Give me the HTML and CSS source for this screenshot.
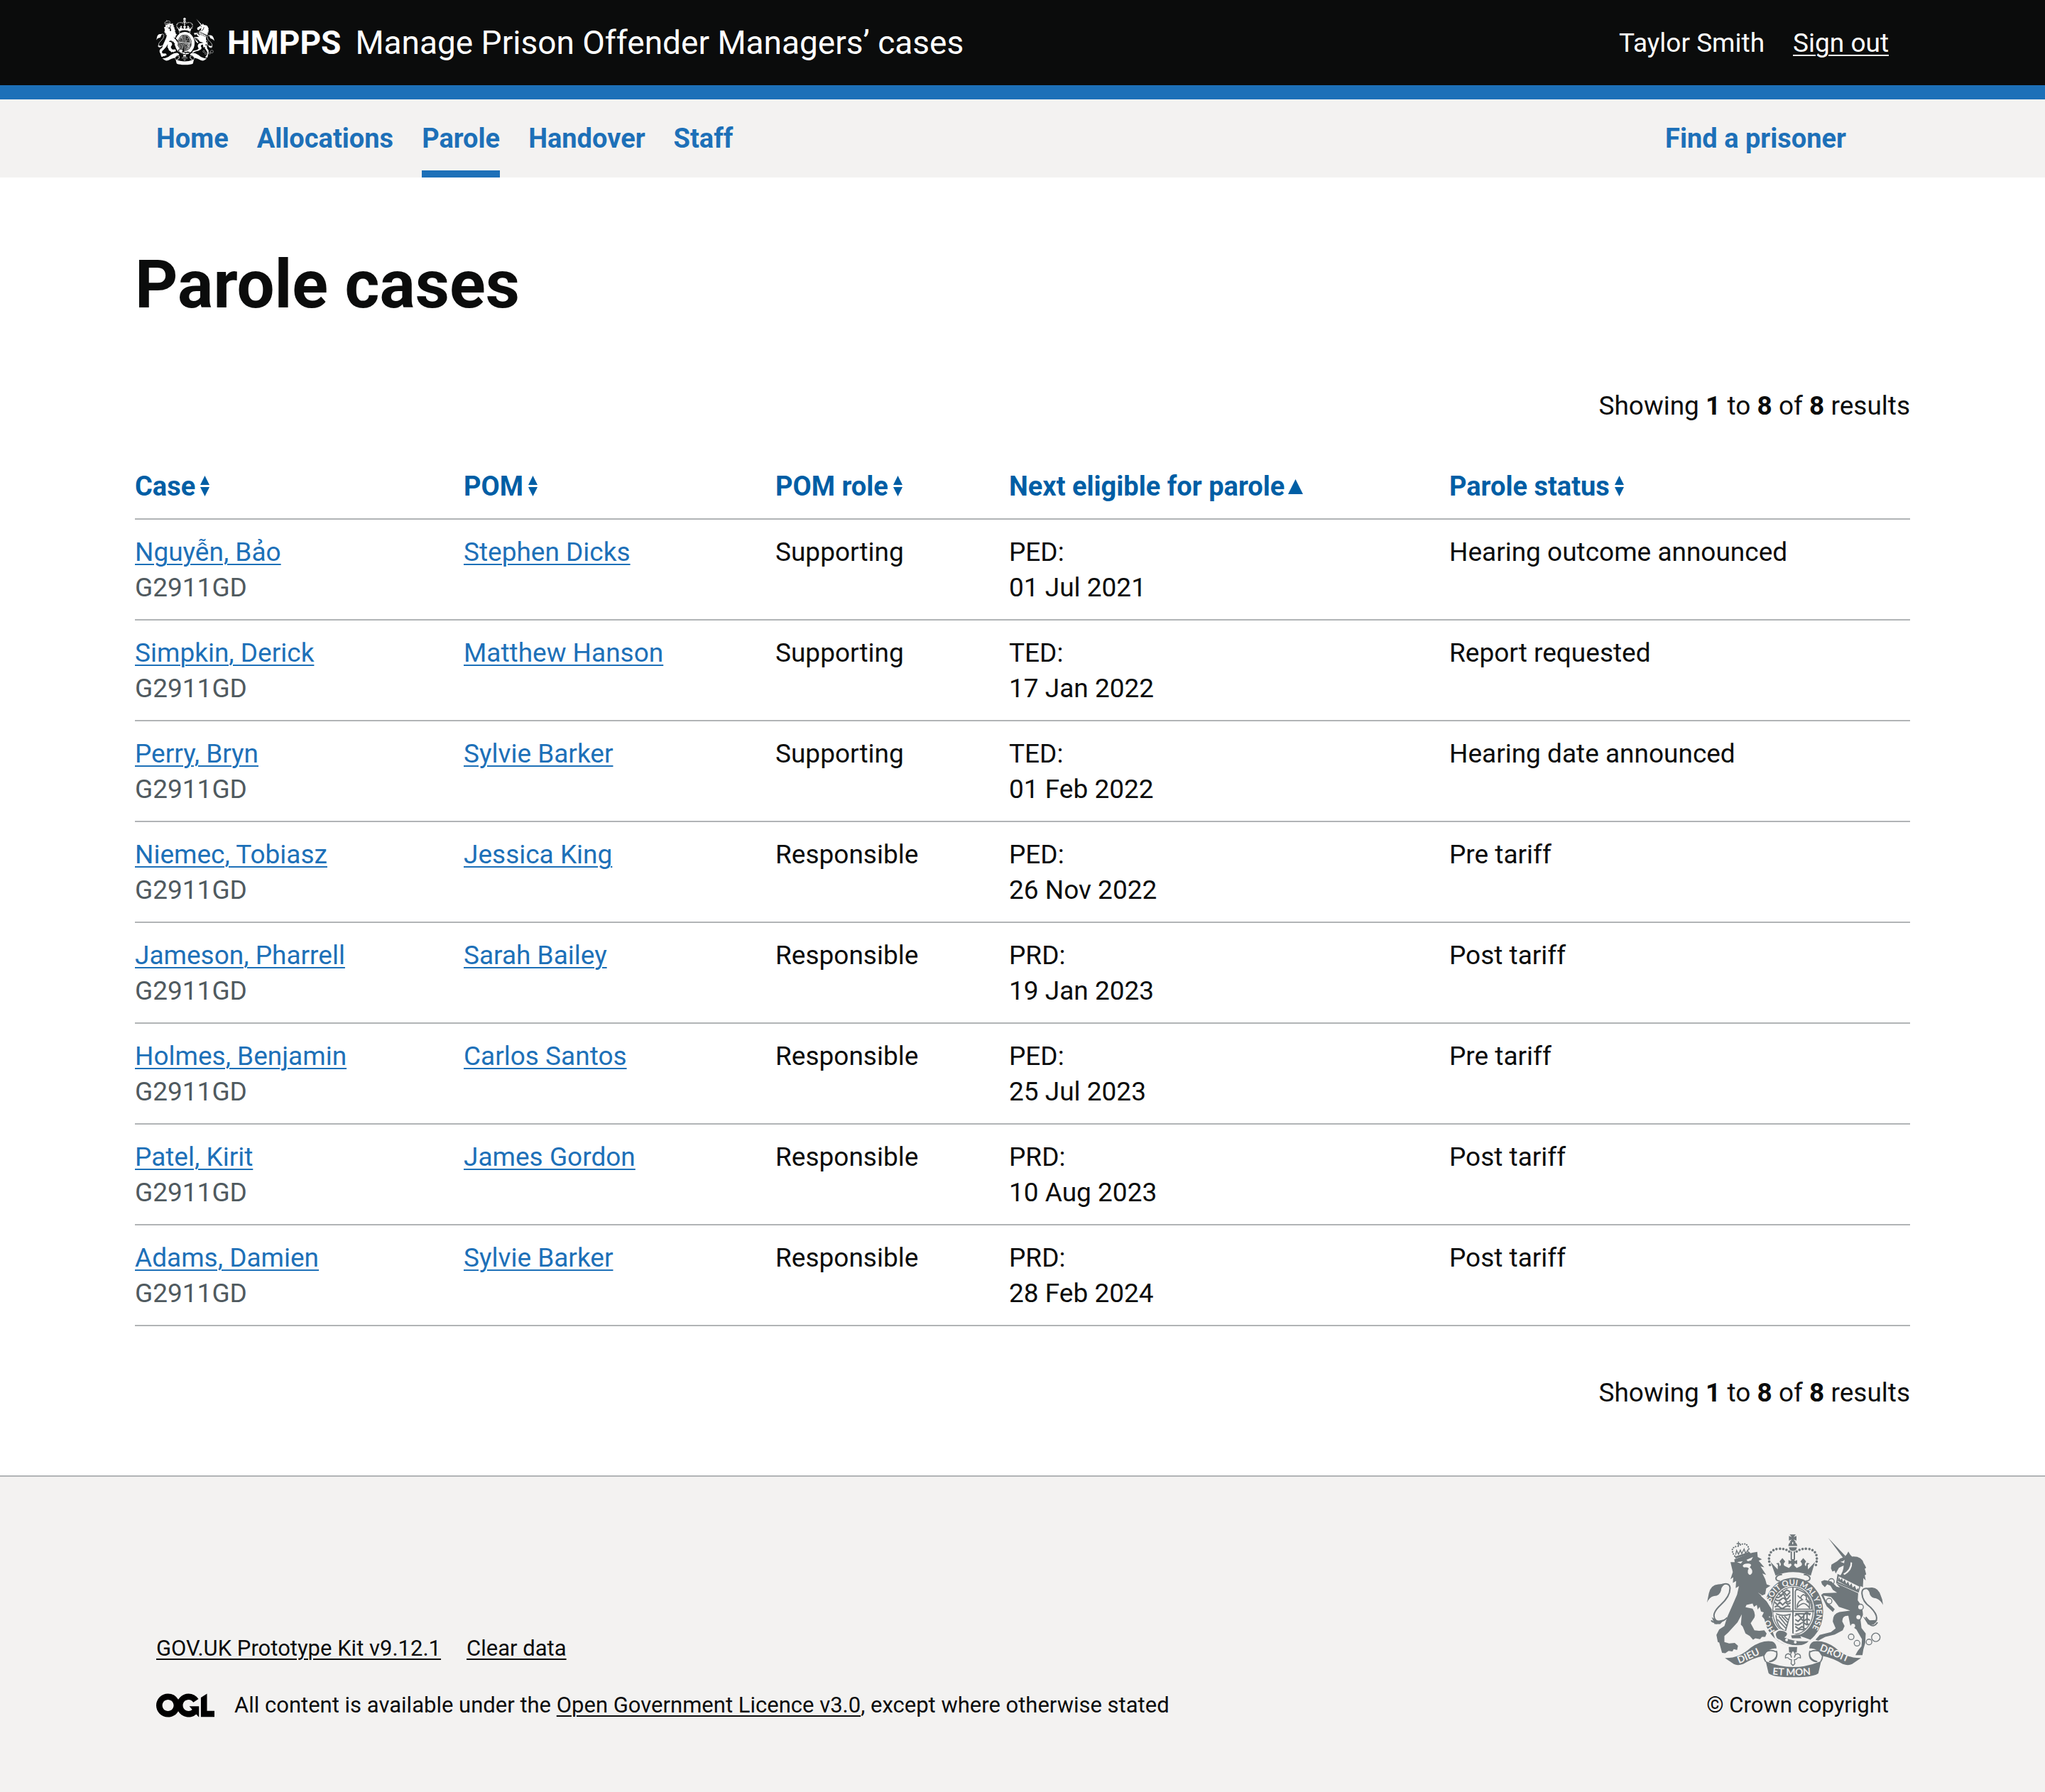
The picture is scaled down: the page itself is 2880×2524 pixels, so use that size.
FILE: index.html
```html
<!DOCTYPE html>
<html lang="en">
<head>
<meta charset="utf-8">
<meta name="viewport" content="width=device-width, initial-scale=1">
<title>Parole cases - Manage Prison Offender Managers’ cases</title>
<link rel="stylesheet" href="styles.css">
</head>
<body>
<svg class="sprite" aria-hidden="true">
  <symbol id="crest" viewBox="70 84 754 614">
    <!-- crown -->
    <g class="ink">
      <path d="M424 88h26l-9 11 12-5v20l-12-5 9 11h-26l9-11-12 5V94l12 5z"/>
      <path d="M418 137q3-18 17-18v10h4v-10q14 0 18 18z"/>
      <path d="M421 142h34q-2 16-17 16t-17-16z"/>
      <path d="M428 160h6v36h-6zM441 160h6v36h-6z"/>
      <path d="M343 205l30 32 1-20-8-6 12-2 4 14q6-2 4-12l-5-8 12-15 12 15-6 8q-2 10 6 12l16 8 11-12q0-12-13-4v-18q13 8 13-4h11q0 12 13 4v18q-13-8-13 4l11 12 16-8q8-2 6-12l-6-8 12-15 12 15-5 8q-2 10 4 12l4-14 12 2-8 6 1 20 30-32-18 58q-75-30-150 0z"/>
    </g>
    <g class="beads"><path d="M340 218q-16-62 34-69 32-2 49 12M536 218q16-62-34-69-32-2-49 12"/></g>
    <path class="line w6" d="M382 286q-18 0-16-14 4-12 26-14M494 286q18 0 16-14-4-12-26-14"/>
    <!-- garter and shield -->
    <ellipse class="ink" cx="440" cy="417" rx="127" ry="145"/>
    <ellipse class="gap" cx="438" cy="413" rx="92" ry="107"/>
    <ellipse class="line w4" cx="438" cy="413" rx="86" ry="101"/>
    <path class="line w6" d="M438 312v205M350 415h178"/>
    <path class="line w6" d="M366 352q8 12 20-4t18 6 22-8M362 364q14 12 26 0t20 4 20-2M360 376l12 12 10-12 12 12 12-12 10 10 12-8M360 398q12-10 22 0t20 0 24-2M376 338l12 12 12-16 12 14 14-14M362 406h66M390 326l8 10 14-12 14 8"/>
    <path class="line w6" d="M446 436q10-14 20 0t20-6 24 2M448 450l12 8 12-12 12 12 14-12 12 8M446 468q12 10 24 0t20 0 16 0M448 480l14 10 14-10 16 10M448 426h66M450 500l18-8 18 2M484 424v68M498 426v44"/>
    <path class="line w5" d="M448 330v76h70q0-40-30-70l-34-16zM456 398q0-26 22-32-14-12 4-22 18 4 12 22 18 2 14 34-16-20-26-18t-26 16zM458 348l12 12M508 380l-12-8"/>
    <path class="line w5" d="M366 432q2 50 40 68l20-72q-34 10-60-2M378 436l36 44M390 436l28 30M372 450l38 40M402 436l18 18"/>
    <!-- belt buckle -->
    <path class="gap" d="M352 504l30-14 130 46-20 30q-80 10-130-34z"/>
    <path class="ink" d="M365 512q4-16 24-14 16 0 24 12 0 10-12 16 50 22 104 16-14 18-48 18-44 0-74-24-18-4-18-24zM430 518l36-4 8 16-40 0z"/>
    <circle class="gap" cx="411" cy="537" r="6"/><circle class="gap" cx="448" cy="547" r="6"/>
    <!-- lion -->
    <path class="gap" d="M286 330l60 46 8 66-54 0z"/>
    <path class="ink" d="M172 206l18 0-2-12 76-28 22-4 2 22 18 10-14 6 24 28-16-4 24 36-16-6 12 24 6 22 16 6-18 12-4 24-18 8 26 24 20 34 4 30-10 6-4-10-6 18-10-8-2 8-14-16 8-16-12-4-6-20-8 12-4-20-12 8-6-14-26 6-4 10 30 6q14 20 8 38l-16 24 16 30 20 2 22-2 10 14-6 14-14 0-8 10-20-4-10 6-14-16-18-10-12-30-8-8 4-44-18 34-40 44-16 14 0 26 20 6 24-2 14 12-4 18-14-4-6 10-16-2-14 10-14-2-12-44-6-2-6-30 12-24 22-14 12-38 24-54 18-42 8-36-14 8 2-30-14 8 2-24-12 8 10-30z"/>
    <path class="gap" d="M200 206l24-4-8 10zM240 196l28-12-8 14-14 4zM224 222q4-10 20-10 14-2 16 6-2 6-6 10 14 10 10 24-10 16-18 0-2-12 4-20-8-6-16-4-6 2-10-6zM288 334l38 26 22 36-6 2-20-32z"/>
    <path class="ink" d="M190 182l62-20 8 8-66 20z"/>
    <path class="line w4" d="M194 174l4-18 8 16 8-18 6 16 10-20 6 18 10-14 2 16M206 118v18M198 127h16"/>
    <g class="beads small"><path d="M190 180q-26-38 14-42 42-28 48 22"/></g>
    <path class="line w6" d="M122 308q44-22 48 6 2 36-40 74-44 40-20 66 22 14 48-12M112 462q-16 2-22-8M120 460l-10 8"/>
    <path class="ink" d="M72 378q4-20 8-40 8-36 40-38 14-2 26 2-14 10-14 24-6 24-30 24-20 4-30 28zM92 440l24 16 30-6-18 20-24 0z"/>
    <!-- unicorn -->
    <path class="ink" d="M588 102l74 78-10 8z"/>
    <path class="ink" d="M600 232l2-16 24-14 14-12 18-6 10-12 6-12 8 14 8 8q42-2 50 30 4 4 10 18l-6 4 6 24-6 4 4 22-10-10-2 38-100-44q18-22 18-48l-20 10-14 24-4-12-10 4z"/>
    <path class="gap" d="M640 204q12 0 18-8l-2 14zM652 256q32-18 32-50l6 2q2 32-32 52z"/>
    <path class="ink" d="M628 256l98 50-8 30-96-42z"/>
    <path class="gap" d="M633 266l88 44-6 18-86-38z"/>
    <path class="ink" d="M629 286l6-16 5 12 7-8 4 16 8-10 6 18 8-10 6 18 9-10 4 18 10-8 6 18 8-8 0 12-6 2z"/>
    <path class="ink" d="M622 296l94 42-2 30q24 30 22 64l-10 20 4 34 18 24-2 40-8 28-4 24-30 0 10-18 16-20 2-30-24-42-26-18-8-40q-26-2-26 24l10 20-8 18-34 18-40 10-30 16-12-4 18-20 48-12 20-16-12-28q-2-34 28-42l46-6-48-16-18-24-16-18-32-6 12 26 24 20 12 12-8 12-26-24-24-48 10-8 58-2-18-12-10-18-14-6-10 12-12-12-4-12 14-6 30 6 22 22 14 4z"/>
    <g class="chain"><circle cx="602" cy="288" r="12"/><circle cx="592" cy="372" r="12"/><circle class="link-filled" cx="726" cy="397" r="12"/><circle cx="686" cy="524" r="12"/><circle cx="711" cy="551" r="12"/><circle cx="762" cy="546" r="12"/><circle cx="791" cy="526" r="18"/></g>
    <circle class="gap" cx="717" cy="440" r="9"/><circle class="gap" cx="694" cy="477" r="9"/>
    <path class="line w6" d="M772 322q-42-14-40 18 2 34 36 58 40 40 20 64-18 8-40-22M764 470q20 16 34-8"/>
    <path class="ink" d="M822 388q-2-24-10-40-10-32-36-34-14-2-24 6 12 8 14 24 6 14 26 16 20 8 30 28zM736 436l22 18 40-2-16 20-24 0z"/>
    <!-- ribbon -->
    <path class="ink" d="M148 614q60 2 110-44 50-34 92-26 18 8 18 30-34-4-52 30-50 10-90 36-24 8-40 0z"/>
    <path class="ink" d="M728 614q-60 2-110-44-50-34-92-26-18 8-18 30 34-4 52 30 50 10 90 36 24 8 40 0z"/>
    <path class="ink" d="M322 628q116 50 236 0l-12 52q-20 16-108 16t-104-18z"/>
    <path class="line w5" d="M322 630q-16-26 0-42 20-12 46 0 8 30-32 42M556 630q16-26 0-42-20-12-46 0-8 30 32 42M368 584q10 40-28 46M510 584q-10 40 28 46"/>
    <!-- fleur-de-lis -->
    <path class="ink" d="M420 567h36l-2 24h-32z"/>
    <path class="badge" d="M438 582q16 14 6 30 2-14 14-16 14 2 12 18-10-6-18 6l-8 2 2 16-8 8-8-8 2-16-8-2q-8-12-18-6-2-16 12-18 12 2 14 16-10-16 6-30z"/>
  </symbol>
  <symbol id="sort-both" viewBox="0 0 13 29">
    <path d="M6.5 0L13 13H0zM0 16h13L6.500 29z"/>
  </symbol>
  <symbol id="sort-up" viewBox="0 0 21 21">
    <path d="M10.500 0L21 21H0z"/>
  </symbol>
</svg>

<header class="header">
  <div class="container header-row">
    <div class="brand">
      <svg class="header-crest" aria-hidden="true"><use href="#crest"/></svg>
      <a class="organisation" href="#">HMPPS</a>
      <a class="service" href="#">Manage Prison Offender Managers’ cases</a>
    </div>
    <div class="account">
      <span>Taylor Smith</span>
      <a href="#">Sign out</a>
    </div>
  </div>
</header>

<nav class="nav" aria-label="Primary">
  <div class="container nav-row">
    <a href="#">Home</a>
    <a href="#">Allocations</a>
    <a href="#" class="current" aria-current="page">Parole</a>
    <a href="#">Handover</a>
    <a href="#">Staff</a>
    <a href="#" class="find">Find a prisoner</a>
  </div>
</nav>

<main class="main">
  <h1>Parole cases</h1>
  <p class="results">Showing <b>1</b> to <b>8</b> of <b>8</b> results</p>
  <table class="cases">
    <colgroup><col class="col-case"><col class="col-pom"><col class="col-role"><col class="col-next"><col class="col-status"></colgroup>
    <thead>
      <tr>
        <th scope="col"><button type="button">Case<svg class="sort" aria-hidden="true"><use href="#sort-both"/></svg></button></th>
        <th scope="col"><button type="button">POM<svg class="sort" aria-hidden="true"><use href="#sort-both"/></svg></button></th>
        <th scope="col"><button type="button">POM role<svg class="sort" aria-hidden="true"><use href="#sort-both"/></svg></button></th>
        <th scope="col" aria-sort="ascending"><button type="button">Next eligible for parole<svg class="sort-active" aria-hidden="true"><use href="#sort-up"/></svg></button></th>
        <th scope="col"><button type="button">Parole status<svg class="sort" aria-hidden="true"><use href="#sort-both"/></svg></button></th>
      </tr>
    </thead>
    <tbody>
      <tr><td><a href="#">Nguyễn, Bảo</a><span class="number">G2911GD</span></td><td><a href="#">Stephen Dicks</a></td><td>Supporting</td><td>PED:<br>01 Jul 2021</td><td>Hearing outcome announced</td></tr>
      <tr><td><a href="#">Simpkin, Derick</a><span class="number">G2911GD</span></td><td><a href="#">Matthew Hanson</a></td><td>Supporting</td><td>TED:<br>17 Jan 2022</td><td>Report requested</td></tr>
      <tr><td><a href="#">Perry, Bryn</a><span class="number">G2911GD</span></td><td><a href="#">Sylvie Barker</a></td><td>Supporting</td><td>TED:<br>01 Feb 2022</td><td>Hearing date announced</td></tr>
      <tr><td><a href="#">Niemec, Tobiasz</a><span class="number">G2911GD</span></td><td><a href="#">Jessica King</a></td><td>Responsible</td><td>PED:<br>26 Nov 2022</td><td>Pre tariff</td></tr>
      <tr><td><a href="#">Jameson, Pharrell</a><span class="number">G2911GD</span></td><td><a href="#">Sarah Bailey</a></td><td>Responsible</td><td>PRD:<br>19 Jan 2023</td><td>Post tariff</td></tr>
      <tr><td><a href="#">Holmes, Benjamin</a><span class="number">G2911GD</span></td><td><a href="#">Carlos Santos</a></td><td>Responsible</td><td>PED:<br>25 Jul 2023</td><td>Pre tariff</td></tr>
      <tr><td><a href="#">Patel, Kirit</a><span class="number">G2911GD</span></td><td><a href="#">James Gordon</a></td><td>Responsible</td><td>PRD:<br>10 Aug 2023</td><td>Post tariff</td></tr>
      <tr><td><a href="#">Adams, Damien</a><span class="number">G2911GD</span></td><td><a href="#">Sylvie Barker</a></td><td>Responsible</td><td>PRD:<br>28 Feb 2024</td><td>Post tariff</td></tr>
    </tbody>
  </table>
  <p class="results results-end">Showing <b>1</b> to <b>8</b> of <b>8</b> results</p>
</main>

<footer class="footer">
  <div class="container footer-row">
    <div class="footer-meta">
      <div class="footer-links">
        <a href="#">GOV.UK Prototype Kit v9.12.1</a>
        <a href="#">Clear data</a>
      </div>
      <div class="licence">
        <svg class="ogl" viewBox="0 0 483.2 195.7" role="img" aria-label="Open Government Licence"><path d="M421.5 142.8V.1l-50.7 32.3v161.1h112.4v-50.7zm-122.3-9.6A47.12 47.12 0 0 1 221 97.8c0-26 21.1-47.1 47.1-47.1 16.7 0 31.4 8.7 39.7 21.8l42.7-27.2A97.63 97.63 0 0 0 268.1 0c-36.5 0-68.3 20.1-85.1 49.7A98 98 0 0 0 97.8 0C43.9 0 0 43.9 0 97.8s43.9 97.8 97.8 97.8c36.5 0 68.3-20.1 85.1-49.7a97.76 97.76 0 0 0 149.6 25.4l19.4 22.2h3v-87.8h-80l24.3 27.5zM97.8 145c-26 0-47.1-21.1-47.1-47.1s21.1-47.1 47.1-47.1 47.1 21.1 47.1 47.1S123.8 145 97.8 145"/></svg>
        <span>All content is available under the <a href="#">Open Government Licence v3.0</a>, except where otherwise stated</span>
      </div>
    </div>
    <a class="copyright" href="#">
      <svg class="footer-crest" viewBox="70 84 754 614" aria-hidden="true">
        <use href="#crest" x="70" y="84" width="754" height="614"/>
        <defs>
          <path id="garter" d="M363 500A101 117 0 1 1 500 512"/>
          <path id="dieu" d="M208 638Q270 614 330 580"/>
          <path id="droit" d="M550 582Q606 604 680 636"/>
          <path id="mon" d="M350 684Q438 694 526 684"/>
        </defs>
        <g class="motto">
          <text><textPath href="#garter" startOffset="2">HO</textPath></text>
          <text><textPath href="#garter" startOffset="130">SOIT QUI MAL Y PENSE</textPath></text>
          <text class="large"><textPath href="#dieu">DIEU</textPath></text>
          <text class="large"><textPath href="#droit">DROIT</textPath></text>
          <text class="large"><textPath href="#mon">ET MON</textPath></text>
        </g>
      </svg>
      <span>© Crown copyright</span>
    </a>
  </div>
</footer>
</body>
</html>
```
FILE: styles.css
```css
:root {
  --ink: #0b0c0c;
  --blue: #1d70b8;
  --sort-blue: #005ea5;
  --grey: #f3f2f1;
  --border: #b1b4b6;
}

* {
  box-sizing: border-box;
}

body {
  margin: 0;
  color: var(--ink);
  background: #fff;
  font: 400 37px/50px Roboto, "Liberation Sans", sans-serif;
}

a {
  color: inherit;
  text-decoration-thickness: 2px;
  text-underline-offset: 4px;
}

h1,
p {
  margin: 0;
}

.sprite {
  position: absolute;
  width: 0;
  height: 0;
}

.container {
  max-width: 2440px;
  margin: 0 auto;
}

/* Crest artwork */
.ink {
  fill: currentColor;
}

.gap {
  fill: var(--crest-gap);
}

.line,
.beads,
.chain,
.badge {
  fill: none;
  stroke: currentColor;
  stroke-width: 4px;
}

.w5 {
  stroke-width: 5px;
}

.w6 {
  stroke-width: 6px;
}

.beads {
  stroke-width: 11px;
  stroke-linecap: round;
  stroke-dasharray: 0 14;
}

.beads.small {
  stroke-width: 7px;
  stroke-dasharray: 0 10;
}

.badge,
.link-filled {
  fill: var(--crest-gap);
}

.motto {
  fill: var(--crest-gap);
  font: 700 34px Lato, sans-serif;
}

.motto .large {
  font-size: 42px;
}

/* Header */
.header {
  color: #fff;
  background: var(--ink);
  border-bottom: 20px solid var(--blue);
}

.header-row {
  display: flex;
  align-items: center;
  justify-content: space-between;
  min-height: 120px;
}

.brand,
.account {
  display: flex;
  align-items: center;
}

.brand {
  font-size: 46px;
  line-height: 60px;
}

.brand a {
  text-decoration: none;
}

.header-crest {
  --crest-gap: var(--ink);
  width: 82px;
  height: 68px;
  margin-right: 18px;
  margin-bottom: 4px;
}

.organisation {
  margin-right: 20px;
  font-weight: 700;
}

.account {
  gap: 40px;
  padding-top: 2px;
}

/* Primary navigation */
.nav {
  background: var(--grey);
  font-size: 38px;
}

.nav-row {
  display: flex;
  gap: 40px;
}

.nav a {
  padding: 30px 0 20px;
  border-bottom: 10px solid transparent;
  color: var(--blue);
  font-weight: 700;
  text-decoration: none;
}

.nav .current {
  border-bottom-color: var(--blue);
}

.nav .find {
  margin-left: auto;
  margin-right: 60px;
}

/* Case list */
.main {
  max-width: 2500px;
  margin: 0 auto;
  padding: 101px 0 91px;
}

h1 {
  margin-bottom: 96px;
  font-size: 94px;
  line-height: 100px;
}

.results {
  margin-bottom: 43px;
  text-align: right;
}

.results-end {
  margin: 69px 0 0;
}

.cases {
  width: 100%;
  table-layout: fixed;
  border-spacing: 0;
}

.col-case {
  width: 18.52%;
}

.col-pom {
  width: 17.56%;
}

.col-role {
  width: 13.16%;
}

.col-next {
  width: 24.8%;
}

.cases th,
.cases td {
  padding: 21px 0 19px;
  border-bottom: 2px solid var(--border);
  text-align: left;
  vertical-align: top;
}

.cases th {
  padding: 20px 0;
}

.cases a {
  color: var(--blue);
}

.number {
  display: block;
  color: #505a5f;
}

.cases button {
  display: flex;
  align-items: center;
  padding: 0;
  border: 0;
  background: none;
  color: var(--sort-blue);
  font: inherit;
  font-size: 38px;
  font-weight: 700;
  white-space: nowrap;
}

.sort,
.sort-active {
  fill: currentColor;
}

.sort {
  width: 13px;
  height: 29px;
  margin-left: 7px;
  margin-bottom: 2px;
}

.sort-active {
  width: 21px;
  height: 21px;
  margin-left: 5px;
}

/* Footer */
.footer {
  padding: 80px 0 102px;
  background: var(--grey);
  border-top: 2px solid var(--border);
  font-size: 31px;
  line-height: 40px;
}

.footer-row {
  display: flex;
  align-items: flex-end;
  justify-content: space-between;
}

.footer-meta {
  display: grid;
  gap: 40px;
}

.footer-links {
  display: flex;
  gap: 36px;
}

.licence {
  display: flex;
  align-items: center;
  gap: 28px;
}

.ogl {
  width: 82px;
  height: 34px;
}

.copyright {
  display: grid;
  gap: 19px;
  text-decoration: none;
}

.footer-crest {
  --crest-gap: var(--grey);
  width: 250px;
  height: 203px;
  color: #6f777b;
}
```
